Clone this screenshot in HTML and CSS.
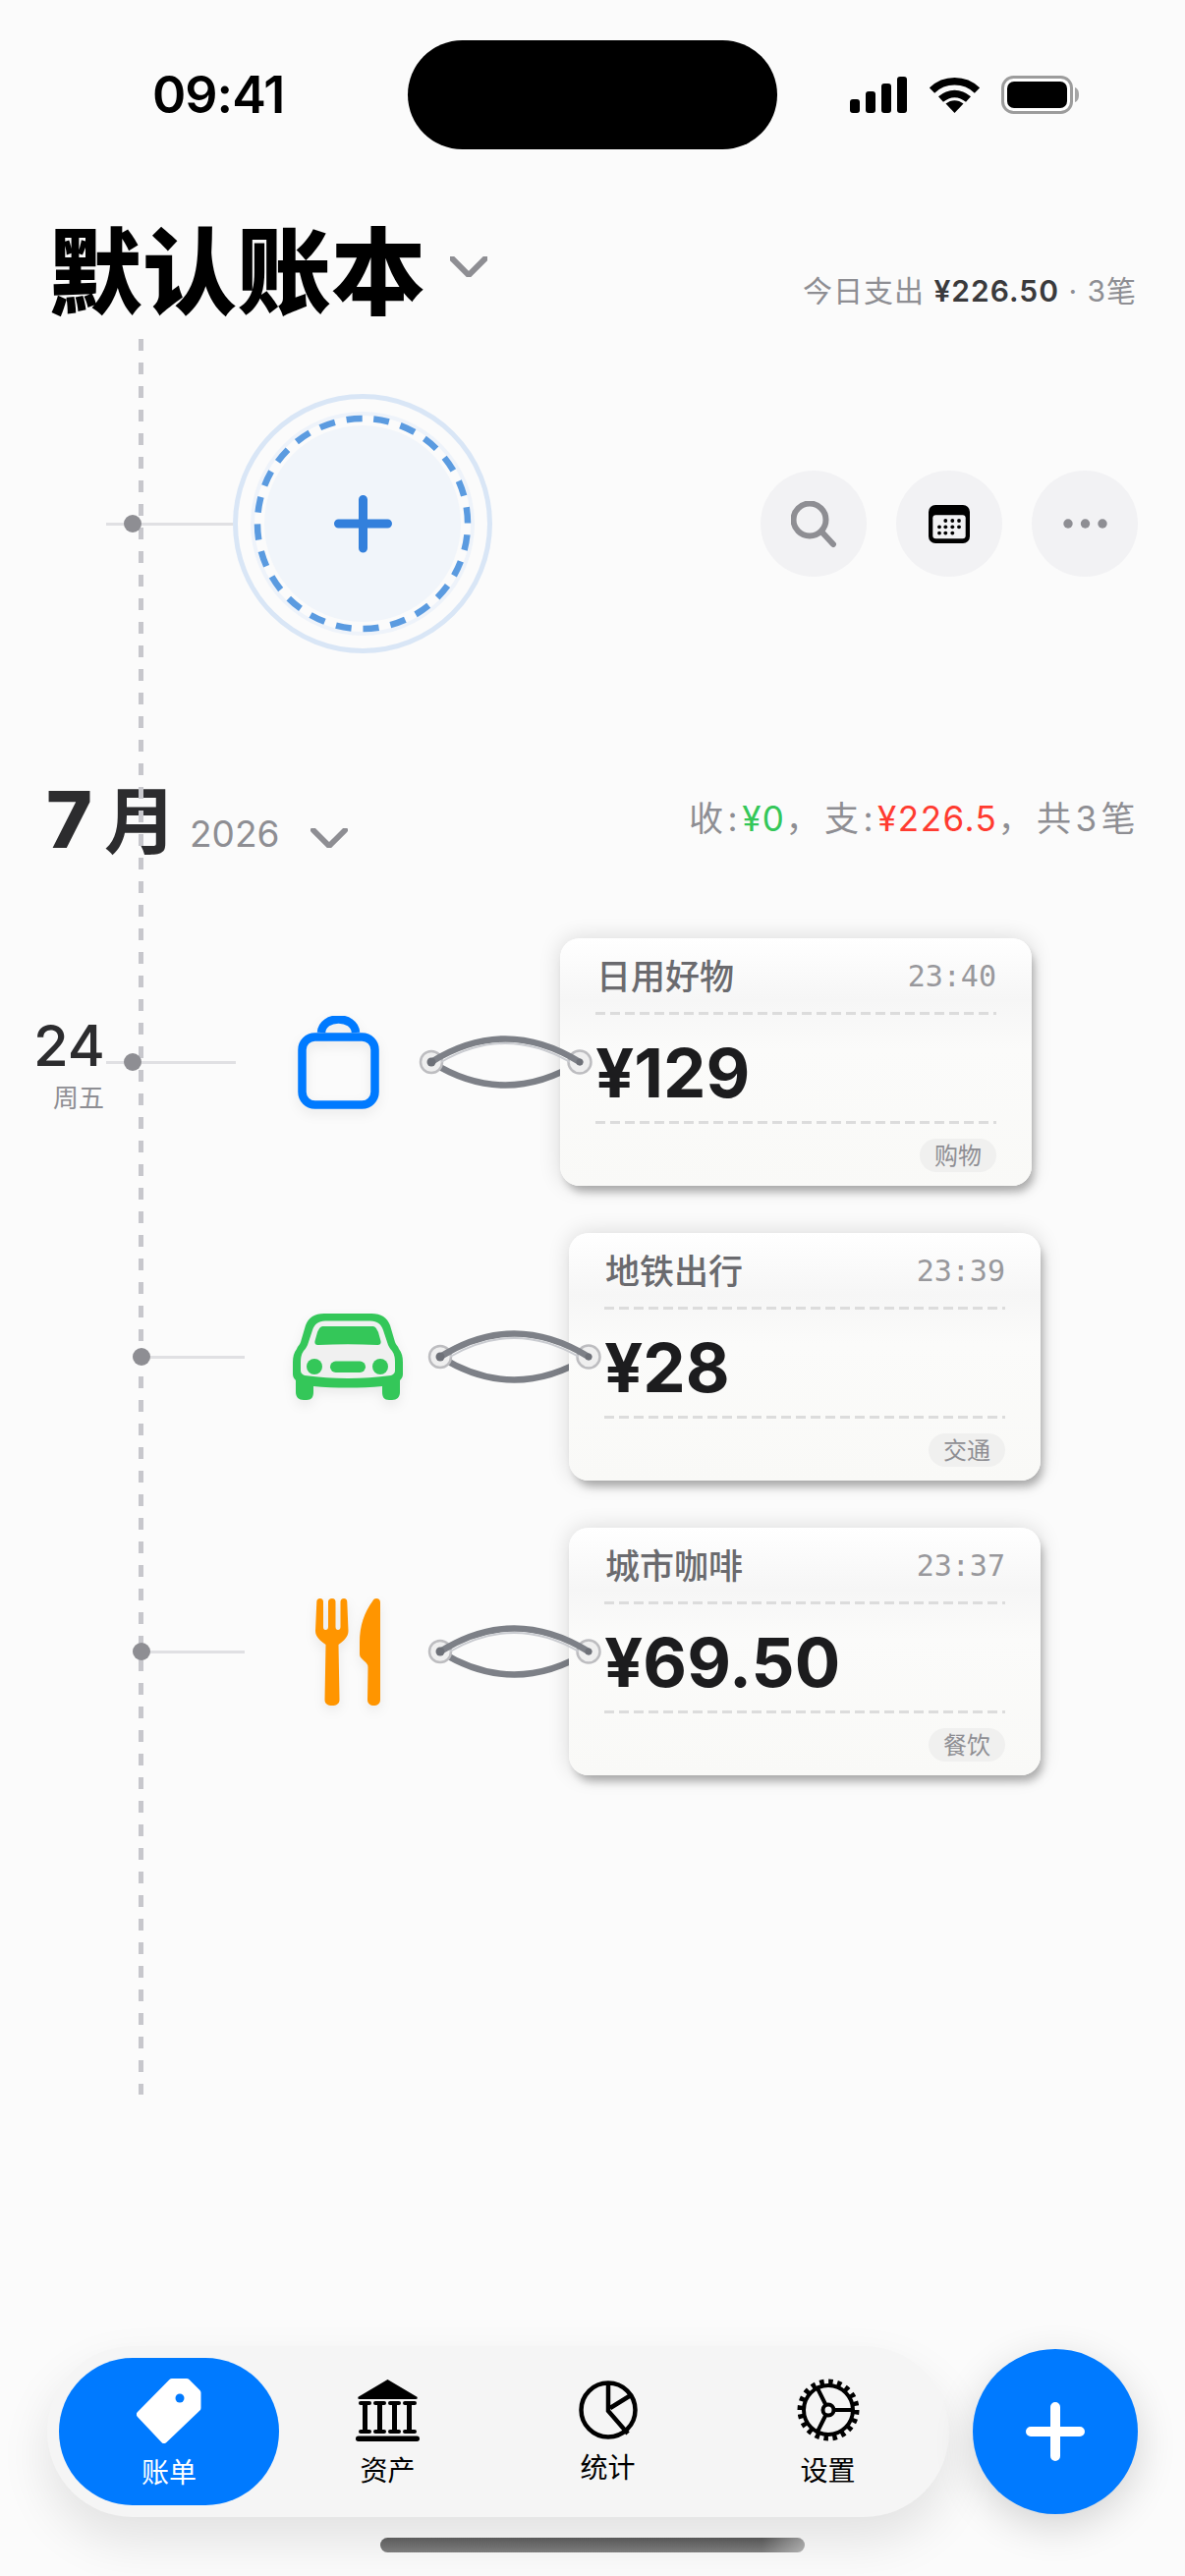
FILE: index.html
```html
<!DOCTYPE html>
<html lang="zh-CN">
<head>
<meta charset="utf-8">
<title>默认账本</title>
<link rel="stylesheet" href="styles.css">
</head>
<body>
<div class="screen">
  <div class="status">
    <span class="clock">09:41</span>
    <div class="island"></div>
    <div class="status-icons">
      <svg class="ic-signal" viewBox="0 0 58 37"><rect x="0" y="23" width="10" height="14" rx="3"/><rect x="16" y="15" width="10" height="22" rx="3"/><rect x="32" y="7" width="10" height="30" rx="3"/><rect x="48" y="0" width="10" height="37" rx="3"/></svg>
      <svg class="ic-wifi" viewBox="0 0 51 37"><path class="wifi-arc" d="M2.500 14C15 1.500 36 1.500 48.500 14"/><path class="wifi-arc" d="M11.500 23C20 15.500 31 15.500 39.500 23"/><path d="M25.500 37L16.500 27.500C22 23 29 23 34.500 27.500Z"/></svg>
      <svg class="ic-battery" viewBox="0 0 80 39"><rect class="bat-shell" x="1.500" y="1.500" width="70" height="36" rx="11"/><rect x="6" y="6" width="61" height="27" rx="7"/><path class="bat-nub" d="M75 12C78 13 79 16 79 19.500C79 23 78 26 75 27Z"/></svg>
    </div>
  </div>

  <header class="book">
    <h1 class="book-title">默认账本</h1>
    <svg class="chev chev-book" viewBox="0 0 38 21"><path d="M2 2L19 19L36 2"/></svg>
    <p class="book-sum">今日支出 <b>¥226.50</b> · 3笔</p>
  </header>

  <main class="timeline">
    <div class="rail"></div>

    <section class="hero">
      <div class="link link-stub"><i class="dot"></i></div>
      <div class="add-ring">
        <svg class="add-svg" viewBox="0 0 264 264">
          <circle class="ring-outer" cx="132" cy="132" r="129.500"/>
          <circle class="ring-soft" cx="132" cy="132" r="112"/>
          <circle class="ring-fill" cx="132" cy="132" r="100"/>
          <circle class="ring-dash" cx="132" cy="132" r="107"/>
          <path class="ring-plus" d="M107.500 132H157.500M132.500 107.500V157"/>
        </svg>
      </div>
      <div class="tools">
        <button class="tool"><svg class="ic-search" viewBox="0 0 48 48"><circle cx="19" cy="19" r="16.500"/><path d="M31 31L43 44"/></svg></button>
        <button class="tool"><svg class="ic-cal" viewBox="0 0 42 39"><rect class="cal-body" width="42" height="39" rx="7"/><rect class="cal-page" x="4.300" y="10.300" width="33.400" height="24" rx="3"/><g class="cal-dots"><circle cx="17.300" cy="16" r="1.900"/><circle cx="24.300" cy="16" r="1.900"/><circle cx="31" cy="16" r="1.900"/><circle cx="11" cy="22.300" r="1.900"/><circle cx="17.300" cy="22.300" r="1.900"/><circle cx="24.300" cy="22.300" r="1.900"/><circle cx="31" cy="22.300" r="1.900"/><circle cx="11" cy="28.600" r="1.900"/><circle cx="17.300" cy="28.600" r="1.900"/><circle cx="24.300" cy="28.600" r="1.900"/></g></svg></button>
        <button class="tool"><svg class="ic-more" viewBox="0 0 45 10"><circle cx="5" cy="5" r="4.700"/><circle cx="22.500" cy="5" r="4.700"/><circle cx="40" cy="5" r="4.700"/></svg></button>
      </div>
    </section>

    <section class="month">
      <h2 class="month-name"><span class="month-num">7</span>月</h2>
      <span class="month-year">2026</span>
      <svg class="chev chev-month" viewBox="0 0 38 21"><path d="M2 2L19 19L36 2"/></svg>
      <p class="month-sum">收:<span class="in">¥0</span>，支:<span class="out">¥226.5</span>，共3笔</p>
    </section>

    <section class="entry entry-first">
      <div class="date"><span class="date-day">24</span><span class="date-week">周五</span></div>
      <div class="link link-stub"><i class="dot"></i></div>
      <div class="cat">
        <svg class="ic-bag" viewBox="0 0 83 95"><path d="M24 17C25 -1 58 -1 59 17"/><rect x="4.500" y="21.500" width="74" height="69" rx="13"/></svg>
      </div>
      <article class="tag">
        <svg class="string string-back" viewBox="0 0 180 80"><path d="M12 40Q87 87 163 40"/></svg>
        <div class="card">
          <div class="card-head"><span class="card-title">日用好物</span><span class="card-time">23:40</span></div>
          <div class="card-amount">¥129</div>
          <div class="card-foot"><span class="chip">购物</span></div>
        </div>
        <svg class="string string-front" viewBox="0 0 180 80"><circle class="eye" cx="12" cy="40" r="11"/><circle class="eye" cx="163" cy="40" r="11.500"/><path class="s-main" d="M12 40Q87 -7 163 40"/><path class="s-light" d="M22 40Q87 2 153 40"/><circle class="eye-in" cx="12" cy="40" r="4.500"/><circle class="eye-in" cx="163" cy="40" r="3.500"/></svg>
      </article>
    </section>

    <section class="entry">
      <div class="link"><i class="dot"></i></div>
      <div class="cat">
        <svg class="ic-car" viewBox="0 0 112 88"><path class="car-green" d="M32 0H80C90 0 96 4 99 12L104 29C105 32 107 33 108 36C111 40 112 44 112 50V62C112 65 110 67 109 68V80C109 85 106 88 101 88H98C93 88 91 85 91 80V74C70 76 42 76 21 74V80C21 85 19 88 14 88H11C6 88 3 85 3 80V68C2 67 0 65 0 62V50C0 44 1 40 4 36C5 33 7 32 8 29L13 12C16 4 22 0 32 0Z"/><path class="car-in" d="M33 7.500H79C86 7.500 90 11 92 17L97 32C98 34 99 36 101 38C103 41 104 44 104 50V58C104 61 102 62 100 63C70 67 42 67 12 63C10 62 8 61 8 58V50C8 44 9 41 11 38C13 36 14 34 15 32L20 17C22 11 26 7.500 33 7.500Z"/><path class="car-green" d="M31 13H81C84 13 85 15 87 19L89.500 28C90 31 88.500 32 86 32C66 31 46 31 26 32C23.500 32 22 31 22.500 28L25 19C27 15 28 13 31 13Z"/><circle class="car-green" cx="22" cy="54" r="8"/><circle class="car-green" cx="89" cy="54" r="8"/><rect class="car-green" x="38" y="48.500" width="36" height="11.500" rx="5.700"/></svg>
      </div>
      <article class="tag">
        <svg class="string string-back" viewBox="0 0 180 80"><path d="M12 40Q87 87 163 40"/></svg>
        <div class="card">
          <div class="card-head"><span class="card-title">地铁出行</span><span class="card-time">23:39</span></div>
          <div class="card-amount">¥28</div>
          <div class="card-foot"><span class="chip">交通</span></div>
        </div>
        <svg class="string string-front" viewBox="0 0 180 80"><circle class="eye" cx="12" cy="40" r="11"/><circle class="eye" cx="163" cy="40" r="11.500"/><path class="s-main" d="M12 40Q87 -7 163 40"/><path class="s-light" d="M22 40Q87 2 153 40"/><circle class="eye-in" cx="12" cy="40" r="4.500"/><circle class="eye-in" cx="163" cy="40" r="3.500"/></svg>
      </article>
    </section>

    <section class="entry">
      <div class="link"><i class="dot"></i></div>
      <div class="cat">
        <svg class="ic-food" viewBox="0 0 66 109"><path d="M4.700 0C7 0 8 1.300 8 3.500V29C8 31 8.800 32 10.300 32C12 32 13 31 13 29V3.500C13 1.300 14.500 0 17 0C19.500 0 20.500 1.300 20.500 3.500V29C20.500 31 21.500 32 23 32C24.500 32 25.500 31 25.500 29V3.500C25.500 1.300 26.800 0 29 0C31.200 0 32.300 1.300 32.300 3.500L33.500 33C33.500 39 29 43 23.500 47L24.500 103C24.500 107 21.500 109 17 109C12.500 109 9.500 107 9.500 103L10.500 47C5 43 0 39 0 33L1.300 3.500C1.300 1.300 2.500 0 4.700 0Z"/><path d="M62 0C64.500 0 66 1.500 66 4V103C66 107 63 109 59.500 109C56 109 53 107 53 103L53.500 70C53.500 67 52 66 50 64L46.500 60.500C45.500 59.500 45 58 45 56V45C45 27 50 14 58 3C59 1 60 0 62 0Z"/></svg>
      </div>
      <article class="tag">
        <svg class="string string-back" viewBox="0 0 180 80"><path d="M12 40Q87 87 163 40"/></svg>
        <div class="card">
          <div class="card-head"><span class="card-title">城市咖啡</span><span class="card-time">23:37</span></div>
          <div class="card-amount">¥69.50</div>
          <div class="card-foot"><span class="chip">餐饮</span></div>
        </div>
        <svg class="string string-front" viewBox="0 0 180 80"><circle class="eye" cx="12" cy="40" r="11"/><circle class="eye" cx="163" cy="40" r="11.500"/><path class="s-main" d="M12 40Q87 -7 163 40"/><path class="s-light" d="M22 40Q87 2 153 40"/><circle class="eye-in" cx="12" cy="40" r="4.500"/><circle class="eye-in" cx="163" cy="40" r="3.500"/></svg>
      </article>
    </section>
  </main>

  <footer class="dock">
    <nav class="tabs">
      <a class="tab tab-on">
        <svg class="tab-ic ic-tag" viewBox="0 0 66 66"><path class="tag-body" d="M36 3.500H51L62 14.500V30L28 62.500L3.500 36.500Z"/><circle class="tag-hole" cx="44" cy="20" r="4.500"/></svg>
        <span class="tab-label">账单</span>
      </a>
      <a class="tab">
        <svg class="tab-ic ic-bank" viewBox="0 0 65 64"><path class="bank-roof" d="M32.500 1L62 18.500Q64 20.500 61 21H4Q1 20.500 3 18.500Z"/><path class="bank-line" d="M5 25H14M20 25H29M35 25H44M50 25H60M5 54H14M20 54H29M35 54H44M50 54H60"/><path class="bank-col" d="M9.500 25V54M24.500 25V54M39.500 25V54M54.500 25V54"/><rect x="0" y="58.500" width="65" height="5.500" rx="2.700"/></svg>
        <span class="tab-label">资产</span>
      </a>
      <a class="tab">
        <svg class="tab-ic ic-pie" viewBox="0 0 60 60"><circle cx="30" cy="30" r="27.500"/><path d="M30 3V31L50 54M32 28L53 15"/></svg>
        <span class="tab-label tab-label-up">统计</span>
      </a>
      <a class="tab">
        <svg class="tab-ic ic-gear" viewBox="0 0 64 64"><circle class="gear-teeth" cx="32" cy="32" r="28.500"/><circle cx="32" cy="32" r="25"/><circle cx="32" cy="32" r="5.500"/><path d="M38 32H57M29.500 27L20 8M29.500 37L20 56"/></svg>
        <span class="tab-label">设置</span>
      </a>
    </nav>
    <button class="fab"><svg class="ic-fab" viewBox="0 0 60 60"><path d="M5 30H55M30 5V55"/></svg></button>
  </footer>
  <div class="home-bar"></div>
</div>
</body>
</html>
```
FILE: styles.css
```css
* { box-sizing: border-box; margin: 0; padding: 0; }
html, body { width: 1206px; height: 2622px; overflow: hidden; }
body { background: #fbfbfb; font-family: Inter, "Noto Sans CJK SC", sans-serif; color: #000; }
button { border: 0; background: none; font: inherit; }
.screen { width: 1206px; height: 2622px; display: flex; flex-direction: column; position: relative; }

/* status bar */
.status { display: flex; align-items: center; padding: 41px 0 0 155px; flex: none; }
.clock { width: 260px; font-size: 52px; font-weight: 600; letter-spacing: -1px; line-height: 60px; }
.island { width: 376px; height: 111px; border-radius: 56px; background: #000; flex: none; }
.status-icons { display: flex; align-items: center; margin-left: 74px; }
.status-icons svg { display: block; fill: #000; flex: none; }
.ic-signal { width: 58px; height: 37px; }
.ic-wifi { width: 51px; height: 37px; margin-left: 23px; }
.wifi-arc { fill: none; stroke: #000; stroke-width: 7.500; }
.ic-battery { width: 80px; height: 39px; margin-left: 22px; }
.bat-shell { fill: #fff; stroke: #9c9c9c; stroke-width: 3; }
.bat-nub { fill: #a5a5a5; }

/* header */
.book { display: flex; align-items: flex-start; padding: 67px 49px 0 49px; height: 193px; flex: none; }
.book-title { font-family: "Noto Sans CJK SC", sans-serif; font-size: 96px; font-weight: 900; line-height: 104px; white-space: nowrap; }
.chev { fill: none; stroke: #8e8e93; stroke-width: 6; stroke-linecap: round; flex: none; display: block; }
.chev-book { width: 38px; height: 21px; margin: 42px 0 0 25px; }
.book-sum { margin: 57px 0 0 auto; font-size: 30px; line-height: 40px; letter-spacing: 1px; color: #8e8e93; white-space: nowrap; }
.book-sum b { font-weight: 600; color: #3a3a3c; }

/* timeline */
.timeline { position: relative; flex: none; }
.rail { position: absolute; left: 141px; top: 0; width: 5px; height: 1787px; background: repeating-linear-gradient(180deg, #c7c7cc 0 12px, transparent 12px 24px); }
.dot { position: absolute; width: 18px; height: 18px; border-radius: 50%; background: #8e8e93; top: -7.500px; left: 0; }
.link { position: relative; flex: none; height: 3px; width: 114px; margin-left: 135px; background: #e0e0e3; }
.link-stub { width: 132px; margin-left: 0; }
.link-stub .dot { left: 18px; }

.hero { display: flex; align-items: center; padding: 56px 48px 0 108px; }
.hero .link { width: 129px; }
.add-ring { width: 264px; height: 264px; flex: none; }
.add-svg { width: 264px; height: 264px; display: block; overflow: visible; }
.ring-outer { fill: #fbfbfb; stroke: #d9e6f6; stroke-width: 5; }
.ring-soft { fill: none; stroke: #eef3fa; stroke-width: 4; }
.ring-fill { fill: #f1f5fa; }
.ring-dash { fill: none; stroke: #5b9be0; stroke-width: 6.500; stroke-dasharray: 16 12; transform: rotate(-84deg); transform-origin: 132px 132px; }
.ring-plus { fill: none; stroke: #3380dc; stroke-width: 9; stroke-linecap: round; }
.tools { display: flex; gap: 30px; margin-left: auto; }
.tool { width: 108px; height: 108px; border-radius: 50%; background: #f2f2f4; display: flex; align-items: center; justify-content: center; }
.ic-search { width: 48px; height: 48px; fill: none; stroke: #8e8e93; stroke-width: 6; stroke-linecap: round; margin: 2px 0 0 2px; }
.ic-cal { width: 42px; height: 39px; }
.cal-page { fill: #f2f2f4; }
.cal-dots { fill: #000; }
.ic-more { width: 45px; height: 10px; fill: #8e8e93; }

.month { display: flex; align-items: flex-start; padding: 0 46px 0 47px; height: 266px; }
.month-name { font-family: "Noto Sans CJK SC", sans-serif; font-size: 74px; line-height: 100px; font-weight: 700; color: #2c2c2e; white-space: nowrap; margin-top: 116px; }
.month-num { font-family: Inter, sans-serif; font-size: 80px; font-weight: 800; margin-right: 12px; }
.month-year { font-size: 37px; line-height: 40px; color: #8e8e93; margin: 164px 0 0 13px; }
.chev-month { width: 38px; height: 20px; margin: 178px 0 0 32px; }
.month-sum { margin: 146px 0 0 auto; font-size: 35px; line-height: 44px; letter-spacing: 4.500px; color: #8e8e93; white-space: nowrap; }
.in, .out { letter-spacing: 1.500px; }
.in { color: #34c759; }
.out { color: #ff3b30; }

.entry { display: flex; align-items: center; height: 300px; }
.entry-first .link { margin-left: 0; }
.date { width: 108px; flex: none; display: flex; flex-direction: column; align-items: flex-end; margin-top: 1px; }
.date-day { font-size: 58px; font-weight: 500; line-height: 72px; color: #2c2c2e; width: 70px; margin-right: 4px; text-align: right; }
.date-week { font-size: 26px; line-height: 36px; color: #8e8e93; margin-right: 2px; }

.cat { width: 209px; flex: none; margin-right: 121px; display: flex; justify-content: center; align-items: center; }
.cat svg { filter: drop-shadow(0 5px 6px rgba(0,0,0,.07)); display: block; }
.ic-bag { width: 83px; height: 95px; fill: none; stroke: #007aff; stroke-width: 8.500; }
.ic-car { width: 112px; height: 88px; }
.car-green { fill: #34c759; }
.car-in { fill: #f0f0f0; }
.ic-food { width: 66px; height: 109px; fill: #ff9500; }

.tag { position: relative; width: 480px; height: 252px; flex: none; }
.string { position: absolute; left: -143px; top: 86px; width: 180px; height: 80px; overflow: visible; fill: none; }
.string-back { stroke: #7d8087; stroke-width: 6.500; }
.string-front { z-index: 2; }
.s-main { stroke: #7d8087; stroke-width: 6.500; stroke-linecap: round; }
.s-light { stroke: #c9cbd0; stroke-width: 2; }
.eye { fill: #efefef; stroke: #bdbdc0; stroke-width: 2.500; }
.eye-in { fill: #6e7178; }
.card { position: relative; z-index: 1; width: 480px; height: 252px; border-radius: 20px; padding: 0 36px; background: linear-gradient(180deg, #ffffff 0%, #f6f6f6 25%, #fbfbfa 45%, #f9f9f7 100%); box-shadow: 4px 8px 8px -2px rgba(0,0,0,.28), 0 0 22px rgba(0,0,0,.14); }
.card-head { display: flex; align-items: center; justify-content: space-between; height: 78px; padding: 0 0 5px 1px; background: repeating-linear-gradient(90deg, #dcdcdc 0 10px, transparent 10px 15px) left bottom / 100% 3px no-repeat; }
.card-title { font-size: 35px; line-height: 44px; color: #6a6a6e; font-weight: 500; font-family: "Noto Sans CJK SC", sans-serif; }
.card-time { font-family: "DejaVu Sans Mono", monospace; font-size: 30px; color: #98989c; margin-top: 4px; }
.card-amount { display: flex; align-items: center; height: 111px; padding-top: 7px; font-size: 69px; font-weight: 700; color: #1c1c1e; background: repeating-linear-gradient(90deg, #dcdcdc 0 10px, transparent 10px 15px) left bottom / 100% 3px no-repeat; }
.card-foot { display: flex; justify-content: flex-end; padding-top: 15px; }
.chip { height: 34px; width: 78px; border-radius: 17px; background: #f0f0ef; color: #8e8e93; font-size: 24px; line-height: 36px; text-align: center; }

/* dock */
.dock { margin-top: auto; display: flex; align-items: center; padding: 0 48px 60px 48px; flex: none; }
.tabs { width: 918px; height: 174px; border-radius: 87px; background: #f5f5f5; padding: 12px; display: flex; box-shadow: 0 24px 50px rgba(0,0,0,.1); }
.tab { flex: 0 0 224px; height: 150px; border-radius: 75px; display: flex; flex-direction: column; align-items: center; padding-top: 21px; color: #000; }
.tab-on { background: #007aff; color: #fff; margin-right: -1.500px; }
.tab-ic { display: block; height: 64px; }
.tab-label { font-size: 28px; line-height: 36px; margin-top: 10px; font-family: "Noto Sans CJK SC", sans-serif; }
.tab-label-up { margin-top: 7px; }
.ic-tag { width: 66px; height: 66px; }
.tag-body { fill: #fff; stroke: #fff; stroke-width: 7; stroke-linejoin: round; }
.tag-hole { fill: #007aff; }
.ic-bank { width: 65px; }
.bank-line { stroke: #000; stroke-width: 4; stroke-linecap: round; }
.bank-col { stroke: #000; stroke-width: 5; }
.ic-pie { width: 60px; fill: none; stroke: #000; stroke-width: 4.500; }
.ic-gear { width: 64px; fill: none; stroke: #000; stroke-width: 4; }
.gear-teeth { stroke-width: 6; stroke-dasharray: 4.500 4.450; }
.fab { margin-left: 24px; width: 168px; height: 168px; border-radius: 50%; background: #007aff; display: flex; align-items: center; justify-content: center; box-shadow: 0 12px 40px rgba(0,0,0,.16); flex: none; }
.ic-fab { width: 60px; height: 60px; fill: none; stroke: #fff; stroke-width: 10; stroke-linecap: round; }
.home-bar { position: absolute; left: 387px; top: 2583px; width: 432px; height: 15px; border-radius: 8px; background: linear-gradient(90deg, rgba(120,120,120,.2), transparent 90%, rgba(255,255,255,.4)), linear-gradient(180deg, #555, #7d7d7d); }
```
